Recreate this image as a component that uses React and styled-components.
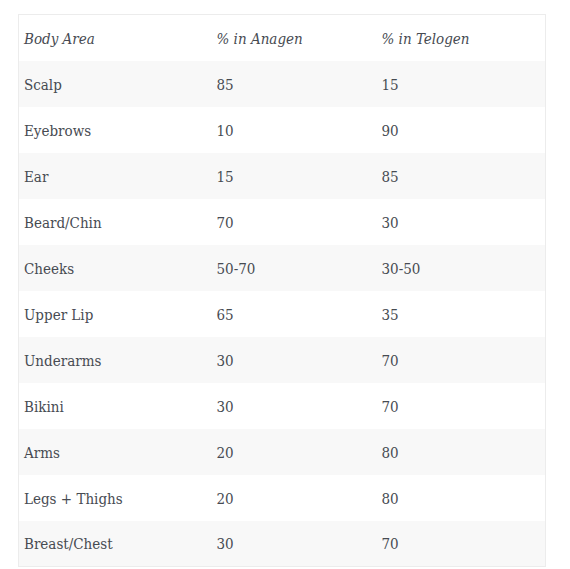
import styled, { createGlobalStyle } from "styled-components";

const GlobalStyle = createGlobalStyle`
  body {
    margin: 0;
    background: #fff;
    font-family: "DejaVu Serif Condensed", "DejaVu Serif", "Liberation Serif", serif;
  }
`;

const rows = [
  ["Scalp", "85", "15"],
  ["Eyebrows", "10", "90"],
  ["Ear", "15", "85"],
  ["Beard/Chin", "70", "30"],
  ["Cheeks", "50-70", "30-50"],
  ["Upper Lip", "65", "35"],
  ["Underarms", "30", "70"],
  ["Bikini", "30", "70"],
  ["Arms", "20", "80"],
  ["Legs + Thighs", "20", "80"],
  ["Breast/Chest", "30", "70"],
];

const App = () => {
  return (
    <>
      <GlobalStyle />
      <Page>
        <Table>
          <colgroup>
            <col style={{ width: 193 }} />
            <col style={{ width: 165 }} />
            <col />
          </colgroup>
          <thead>
            <Row>
              <HeadCell>Body Area</HeadCell>
              <HeadCell>% in Anagen</HeadCell>
              <HeadCell>% in Telogen</HeadCell>
            </Row>
          </thead>
          <tbody>
            {rows.map((r, i) => (
              <Row key={r[0]} $striped={i % 2 === 0}>
                <Cell>{r[0]}</Cell>
                <Cell>{r[1]}</Cell>
                <Cell>{r[2]}</Cell>
              </Row>
            ))}
          </tbody>
        </Table>
      </Page>
    </>
  );
};

const Page = styled.div`
  padding: 14px 0 0 18px;
`;

const Table = styled.table`
  width: 528px;
  border-collapse: collapse;
  table-layout: fixed;
  border: 1px solid #ececec;
  color: #474b52;
  font-size: 15px;
  font-stretch: condensed;
`;

const Row = styled.tr`
  height: 46px;
  background: ${(p) => (p.$striped ? "#f8f8f8" : "#fff")};
`;

const Cell = styled.td`
  padding: 2px 5px 0;
  text-align: left;
  vertical-align: middle;
  white-space: nowrap;
`;

const HeadCell = styled.th`
  padding: 2px 5px 0;
  text-align: left;
  font-weight: normal;
  font-style: italic;
  vertical-align: middle;
`;

export default App;
